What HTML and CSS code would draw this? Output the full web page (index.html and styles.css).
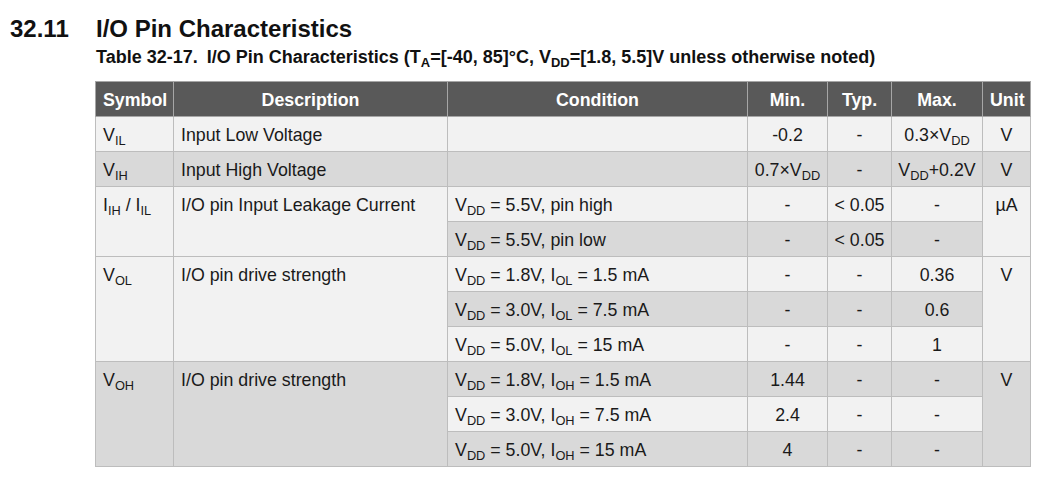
FILE: index.html
```html
<!DOCTYPE html>
<html>
<head>
<meta charset="utf-8">
<link rel="stylesheet" href="styles.css">
</head>
<body>
<div class="page">
  <h1 class="section"><span class="num">32.11</span><span class="title">I/O Pin Characteristics</span></h1>
  <div class="content">
    <p class="caption">Table 32-17.<span class="gap"></span>I/O Pin Characteristics (T<sub>A</sub>=[-40, 85]°C, V<sub>DD</sub>=[1.8, 5.5]V unless otherwise noted)</p>
    <table class="spec">
      <colgroup>
        <col class="c-sym"><col class="c-desc"><col class="c-cond"><col class="c-min"><col class="c-typ"><col class="c-max"><col class="c-unit">
      </colgroup>
      <thead>
        <tr><th>Symbol</th><th>Description</th><th>Condition</th><th>Min.</th><th>Typ.</th><th>Max.</th><th>Unit</th></tr>
      </thead>
      <tbody>
        <tr class="l">
          <td>V<sub>IL</sub></td><td>Input Low Voltage</td><td></td>
          <td class="n">-0.2</td><td class="n">-</td><td class="n">0.3×V<sub>DD</sub></td><td class="n">V</td>
        </tr>
        <tr class="d">
          <td>V<sub>IH</sub></td><td>Input High Voltage</td><td></td>
          <td class="n">0.7×V<sub>DD</sub></td><td class="n">-</td><td class="n">V<sub>DD</sub>+0.2V</td><td class="n">V</td>
        </tr>
        <tr class="l">
          <td rowspan="2" class="top lc">I<sub>IH</sub> / I<sub>IL</sub></td><td rowspan="2" class="top lc">I/O pin Input Leakage Current</td>
          <td>V<sub>DD</sub> = 5.5V, pin high</td><td class="n">-</td><td class="n">&lt; 0.05</td><td class="n">-</td><td rowspan="2" class="n top lc">µA</td>
        </tr>
        <tr class="d">
          <td>V<sub>DD</sub> = 5.5V, pin low</td><td class="n">-</td><td class="n">&lt; 0.05</td><td class="n">-</td>
        </tr>
        <tr class="l">
          <td rowspan="3" class="top lc">V<sub>OL</sub></td><td rowspan="3" class="top lc">I/O pin drive strength</td>
          <td>V<sub>DD</sub> = 1.8V, I<sub>OL</sub> = 1.5 mA</td><td class="n">-</td><td class="n">-</td><td class="n">0.36</td><td rowspan="3" class="n top lc">V</td>
        </tr>
        <tr class="d">
          <td>V<sub>DD</sub> = 3.0V, I<sub>OL</sub> = 7.5 mA</td><td class="n">-</td><td class="n">-</td><td class="n">0.6</td>
        </tr>
        <tr class="l">
          <td>V<sub>DD</sub> = 5.0V, I<sub>OL</sub> = 15 mA</td><td class="n">-</td><td class="n">-</td><td class="n">1</td>
        </tr>
        <tr class="d">
          <td rowspan="3" class="top dc">V<sub>OH</sub></td><td rowspan="3" class="top dc">I/O pin drive strength</td>
          <td>V<sub>DD</sub> = 1.8V, I<sub>OH</sub> = 1.5 mA</td><td class="n">1.44</td><td class="n">-</td><td class="n">-</td><td rowspan="3" class="n top dc">V</td>
        </tr>
        <tr class="l">
          <td>V<sub>DD</sub> = 3.0V, I<sub>OH</sub> = 7.5 mA</td><td class="n">2.4</td><td class="n">-</td><td class="n">-</td>
        </tr>
        <tr class="d">
          <td>V<sub>DD</sub> = 5.0V, I<sub>OH</sub> = 15 mA</td><td class="n">4</td><td class="n">-</td><td class="n">-</td>
        </tr>
      </tbody>
    </table>
  </div>
</div>
</body>
</html>
```

FILE: styles.css
```css
html, body {
  margin: 0;
  padding: 0;
  background: #ffffff;
}

body {
  font-family: "Liberation Sans", Arial, sans-serif;
  color: #1a1a1a;
}

.page {
  padding: 17px 0 0 10px;
}

.section {
  display: flex;
  margin: 0;
  font-size: 24px;
  line-height: 24px;
  font-weight: bold;
  color: #111;
}

.section .num {
  width: 86px;
  flex: none;
}

.content {
  padding-left: 85px;
}

.caption {
  margin: 7px 0 0 1px;
  font-size: 18px;
  line-height: 18px;
  font-weight: bold;
  color: #111;
}

.caption .gap {
  display: inline-block;
  width: 9px;
}

sub {
  font-size: 0.72em;
  line-height: 0;
  vertical-align: -0.28em;
}

.spec {
  margin-top: 15px;
  border-collapse: collapse;
  table-layout: fixed;
  width: 935px;
  font-size: 17.8px;
  line-height: 20px;
}

.c-sym { width: 78px; }
.c-desc { width: 274px; }
.c-cond { width: 300px; }
.c-min { width: 80px; }
.c-typ { width: 64px; }
.c-max { width: 91px; }
.c-unit { width: 48px; }

.spec th,
.spec td {
  border: 1px solid #bdbdbd;
  padding: 8px 7px 6px;
  white-space: nowrap;
  overflow: hidden;
}

.spec th {
  background: #595959;
  color: #ffffff;
  font-weight: bold;
  text-align: center;
  border-color: #a6a6a6;
}

.spec td {
  text-align: left;
  vertical-align: middle;
}

.spec td.n {
  text-align: center;
  padding-left: 2px;
  padding-right: 2px;
}

.spec td.top {
  vertical-align: top;
}

.spec tr.l td { background: #f2f2f2; }
.spec tr.d td { background: #d9d9d9; }
.spec td.lc { background: #f2f2f2 !important; }
.spec td.dc { background: #d9d9d9 !important; }
```
